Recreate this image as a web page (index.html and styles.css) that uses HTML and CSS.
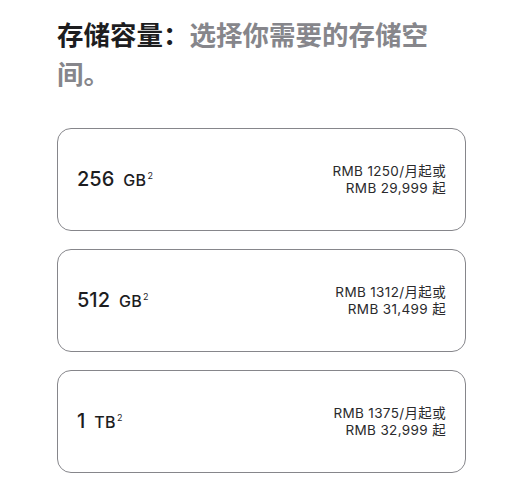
FILE: index.html
```html
<!DOCTYPE html>
<html lang="zh-CN">
<head>
<meta charset="utf-8">
<link rel="stylesheet" href="styles.css">
</head>
<body>
<main class="storage">
  <h2 class="heading"><span class="heading-strong">存储容量：</span><span class="heading-muted">选择你需要的存储空间。</span></h2>
  <div class="options">
    <div class="option">
      <div class="capacity"><span class="cap-num">256</span><span class="cap-unit">GB</span><sup class="cap-note">2</sup></div>
      <div class="price">RMB 1250/月起或<br>RMB 29,999 起</div>
    </div>
    <div class="option">
      <div class="capacity"><span class="cap-num">512</span><span class="cap-unit">GB</span><sup class="cap-note">2</sup></div>
      <div class="price">RMB 1312/月起或<br>RMB 31,499 起</div>
    </div>
    <div class="option">
      <div class="capacity"><span class="cap-num">1</span><span class="cap-unit">TB</span><sup class="cap-note">2</sup></div>
      <div class="price">RMB 1375/月起或<br>RMB 32,999 起</div>
    </div>
  </div>
</main>
</body>
</html>
```
FILE: styles.css
```css
html, body {
  margin: 0;
  padding: 0;
  background: #ffffff;
}
body {
  font-family: Inter, "Noto Sans CJK SC", "Liberation Sans", sans-serif;
  color: #1d1d1f;
}
.storage {
  width: 409px;
  padding: 14px 0 0 57px;
}
.heading {
  margin: 0;
  width: 390px;
  font-size: 26.5px;
  line-height: 39px;
  font-weight: 600;
  font-family: "Noto Sans CJK SC", Inter, sans-serif;
}
.heading-strong {
  color: #1d1d1f;
}
.heading-muted {
  color: #86868b;
}
.options {
  margin-top: 36px;
  display: flex;
  flex-direction: column;
  gap: 18px;
}
.option {
  box-sizing: border-box;
  height: 103px;
  border: 1px solid #86868b;
  border-radius: 14px;
  padding: 0 19px;
  display: flex;
  align-items: center;
  justify-content: space-between;
}
.capacity {
  display: flex;
  align-items: baseline;
  font-size: 20px;
  line-height: 24px;
  font-weight: 500;
  color: #1d1d1f;
}
.cap-unit {
  margin-left: 9px;
  font-size: 16px;
  letter-spacing: 0.3px;
}
.cap-note {
  font-size: 9px;
  align-self: flex-start;
  margin-left: 1px;
  margin-top: 4px;
  font-weight: 400;
  line-height: 1;
}
.price {
  text-align: right;
  font-size: 13.5px;
  line-height: 16.5px;
  letter-spacing: 0.35px;
  color: #2a2a2c;
}
```
